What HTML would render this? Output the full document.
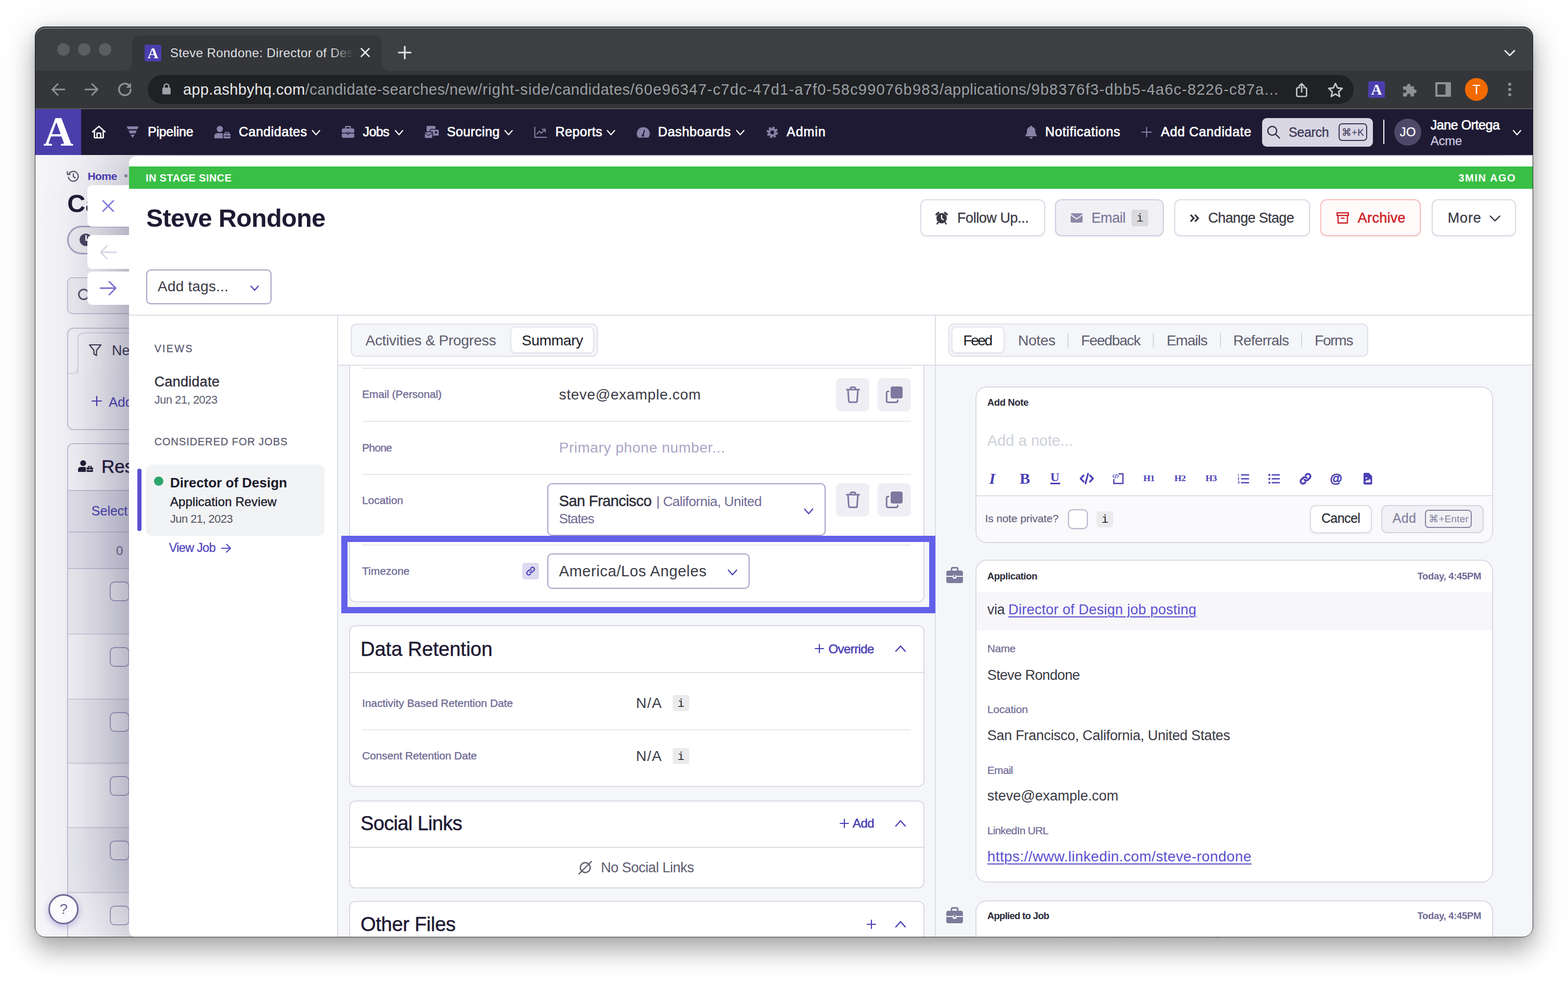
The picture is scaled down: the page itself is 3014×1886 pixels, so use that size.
<!DOCTYPE html>
<html lang="en"><head><meta charset="utf-8"><title>Steve Rondone: Director of Design</title>
<style>
html,body{margin:0;padding:0;background:#fff;}
body{width:3014px;height:1886px;position:relative;overflow:hidden;font-family:"Liberation Sans",sans-serif;}
.a{position:absolute;box-sizing:border-box;}
.t{position:absolute;white-space:nowrap;line-height:1;}
svg{position:absolute;overflow:visible;}
u{text-decoration-thickness:2px;text-underline-offset:4px;}
</style></head><body>
<div class="a" style="left:67px;top:51px;width:2880px;height:1751px;border-radius:20px;box-shadow:0 25px 46px rgba(0,0,0,.29),0 0 14px rgba(0,0,0,.09),0 6px 80px rgba(0,0,0,.10);"></div>
<div class="a" id="win" style="left:67px;top:51px;width:2880px;height:1751px;border-radius:20px;overflow:hidden;background:#f7f7fa;">
<div class="a" style="left:-67px;top:-51px;width:3014px;height:1886px;">
<div class="a" style="left:67px;top:51px;width:2880px;height:86px;background:#3c4043;"></div>
<div class="a" style="left:67px;top:136px;width:2880px;height:74px;background:#35363a;"></div>
<div class="a" style="left:67px;top:208px;width:2880px;height:2px;background:#56575b;"></div>
<div class="a" style="left:254px;top:68px;width:480px;height:70px;background:#35363a;border-radius:16px 16px 0 0;"></div>
<div class="a" style="left:238px;top:120px;width:16px;height:16px;background:radial-gradient(circle at 0 0,rgba(0,0,0,0) 15.5px,#35363a 16.5px);"></div>
<div class="a" style="left:734px;top:120px;width:16px;height:16px;background:radial-gradient(circle at 100% 0,rgba(0,0,0,0) 15.5px,#35363a 16.5px);"></div>
<div class="a" style="left:110px;top:83px;width:24px;height:24px;background:#5b5d61;border-radius:12px;"></div>
<div class="a" style="left:150px;top:83px;width:24px;height:24px;background:#5b5d61;border-radius:12px;"></div>
<div class="a" style="left:190px;top:83px;width:24px;height:24px;background:#5b5d61;border-radius:12px;"></div>
<div class="a" style="left:278px;top:86px;width:32px;height:32px;background:#4b3fae;border-radius:3px;"></div>
<span class="t" id="t1" style="top:88.3px;font-size:29px;color:#fff;font-family:'Liberation Serif',serif;font-weight:700;left:283.5px;">A</span>
<span class="t" id="t2" style="top:90.3px;font-size:24px;color:#dfe1e5;left:327px;letter-spacing:0.45px;">Steve Rondone: Director of Des</span>
<div class="a" style="left:636px;top:80px;width:46px;height:44px;background:linear-gradient(to right,rgba(53,54,58,0),#35363a 95%);"></div>
<svg style="left:692px;top:91px;" width="20" height="20" viewBox="0 0 20 20"><path d="M2.5 2.5 L17.5 17.5 M17.5 2.5 L2.5 17.5" fill="none" stroke="#e3e5e8" stroke-width="2.8" stroke-linecap="round" stroke-linejoin="round" /></svg>
<svg style="left:765px;top:88px;" width="26" height="26" viewBox="0 0 26 26"><path d="M13 1.5 V24.5 M1.5 13 H24.5" fill="none" stroke="#e3e5e8" stroke-width="3.2" stroke-linecap="round" stroke-linejoin="round" /></svg>
<svg style="left:0;top:0" width="3014" height="1886"><path d="M2893.0 97.5 L2902 106.5 L2911.0 97.5" fill="none" stroke="#e3e5e8" stroke-width="3" stroke-linecap="round" stroke-linejoin="round"/></svg>
<svg style="left:98px;top:158px;" width="28" height="28" viewBox="0 0 28 28"><path d="M26 14 H3 M13 3.5 L2.5 14 L13 24.5" fill="none" stroke="#8f9297" stroke-width="3" stroke-linecap="round" stroke-linejoin="round" /></svg>
<svg style="left:162px;top:158px;" width="28" height="28" viewBox="0 0 28 28"><path d="M2 14 H25 M15 3.5 L25.5 14 L15 24.5" fill="none" stroke="#8f9297" stroke-width="3" stroke-linecap="round" stroke-linejoin="round" /></svg>
<svg style="left:225px;top:157px;" width="30" height="30" viewBox="0 0 28 28"><path d="M24.5 14 A10.5 10.5 0 1 1 21.2 6.3" fill="none" stroke="#8f9297" stroke-width="3.1" stroke-linecap="round" stroke-linejoin="round" /><path d="M25 2 V11 H16 Z" fill="#8f9297" /></svg>
<div class="a" style="left:284px;top:144px;width:2318px;height:56px;background:#202124;border-radius:28px;"></div>
<svg style="left:311px;top:159px;" width="18" height="24" viewBox="0 0 18 24"><path d="M4.5 10 V7 A4.5 4.5 0 0 1 13.5 7 V10" fill="none" stroke="#9ea3a8" stroke-width="2.6" stroke-linecap="round" stroke-linejoin="round" /><rect x="1" y="9.5" width="16" height="13" rx="2" fill="#9ea3a8"/></svg>
<span class="t" id="t3" style="top:157.8px;font-size:29px;color:#e8eaed;left:352px;letter-spacing:0.38px;">app.ashbyhq.com</span>
<span class="t" id="t4" style="top:157.8px;font-size:29px;color:#9aa0a6;left:586.6px;letter-spacing:0.41px;">/candidate-searches/new</span>
<span class="t" id="t5" style="top:157.8px;font-size:29px;color:#9aa0a6;left:918.5px;letter-spacing:1.04px;">/right-side</span>
<span class="t" id="t6" style="top:157.8px;font-size:29px;color:#9aa0a6;left:1057.3px;letter-spacing:0.52px;">/candidates</span>
<span class="t" id="t7" style="top:157.8px;font-size:29px;color:#9aa0a6;left:1211.3px;letter-spacing:1.21px;">/60e96347-c7dc-47d1-a7f0-58c99076b983</span>
<span class="t" id="t8" style="top:157.8px;font-size:29px;color:#9aa0a6;left:1806px;letter-spacing:0.46px;">/applications</span>
<span class="t" id="t9" style="top:157.8px;font-size:29px;color:#9aa0a6;left:1973.2px;letter-spacing:1.20px;">/9b8376f3-dbb5-4a6c-8226-c87a...</span>
<svg style="left:2491.3px;top:158.6px;" width="22" height="28" viewBox="0 0 22 28"><path d="M7 9.5 H4.5 Q1.5 9.5 1.5 12.5 V23.5 Q1.5 26.5 4.5 26.5 H17.5 Q20.5 26.5 20.5 23.5 V12.5 Q20.5 9.5 17.5 9.5 H15 M11 18 V2 M6 6.8 L11 1.8 L16 6.8" fill="none" stroke="#c4c7ca" stroke-width="2.7" stroke-linecap="round" stroke-linejoin="round" /></svg>
<svg style="left:2550.5px;top:156.5px;" width="32" height="32" viewBox="0 0 32 32"><path d="M16 3.5 L19.9 12 L29 13 L22.2 19.3 L24.1 28.5 L16 23.8 L7.9 28.5 L9.8 19.3 L3 13 L12.1 12 Z" fill="none" stroke="#c4c7ca" stroke-width="2.9" stroke-linecap="round" stroke-linejoin="round" /></svg>
<div class="a" style="left:2630px;top:156px;width:32px;height:32px;background:#4b3fae;border-radius:3px;"></div>
<span class="t" id="t10" style="top:158.3px;font-size:29px;color:#fff;font-family:'Liberation Serif',serif;font-weight:700;left:2635.5px;">A</span>
<svg style="left:2695px;top:157px;" width="30" height="30" viewBox="0 0 30 30"><path d="M2 9 H9.5 V7.5 A3.5 3.5 0 1 1 16.5 7.5 V9 H23 V15 H24.5 A3.5 3.5 0 1 1 24.5 22 H23 V28.5 H16.5 V26.5 A3.5 3.5 0 1 0 9.5 26.5 V28.5 H2 V21.5 H4 A3.2 3.2 0 1 0 4 15.5 H2 Z" fill="#8e9094" /></svg>
<svg style="left:2759px;top:158px;" width="30" height="28" viewBox="0 0 30 28"><rect x="2" y="2" width="26" height="24" fill="none" stroke="#8e9094" stroke-width="4"/><rect x="19.5" y="2" width="9" height="24" fill="#8e9094"/></svg>
<div class="a" style="left:2816px;top:150px;width:44px;height:44px;background:#f06a00;border-radius:22px;"></div>
<span class="t" id="t11" style="top:159.8px;font-size:25px;color:#fff;left:2830.5px;">T</span>
<div class="a" style="left:2899px;top:159.1px;width:6px;height:6px;background:#8e9094;border-radius:3px;"></div>
<div class="a" style="left:2899px;top:169px;width:6px;height:6px;background:#8e9094;border-radius:3px;"></div>
<div class="a" style="left:2899px;top:178.9px;width:6px;height:6px;background:#8e9094;border-radius:3px;"></div>
<div class="a" style="left:67px;top:210px;width:2880px;height:88px;background:#1e1a33;"></div>
<div class="a" style="left:67px;top:210px;width:89px;height:88px;background:#4a3eab;"></div>
<span class="t" id="t12" style="top:213.2px;font-size:80px;color:#fff;font-family:'Liberation Serif',serif;font-weight:700;left:83.2px;">A</span>
<svg style="left:176px;top:241px;" width="28" height="26" viewBox="0 0 28 26"><path d="M2 12.5 L14 2 L26 12.5 M5.5 10.5 V23 Q5.5 24 6.5 24 H21.5 Q22.5 24 22.5 23 V10.5 M10.5 24 V15 H17.5 V24" fill="none" stroke="#fff" stroke-width="2.6" stroke-linecap="round" stroke-linejoin="round" /></svg>
<svg style="left:243px;top:243px;" width="24" height="22" viewBox="0 0 24 22"><path d="M0.5 0 H23.5 L21 5.5 H3 Z" fill="#8882a8" /><path d="M4.2 8 H19.8 L17.3 13.5 H6.7 Z" fill="#8882a8" /><path d="M8 16 H16 L12 22 Z" fill="#8882a8" /></svg>
<span class="t" id="t13" style="top:240.8px;font-size:25px;color:#fff;-webkit-text-stroke:0.7px #fff;left:284px;letter-spacing:-0.19px;">Pipeline</span>
<svg style="left:412px;top:242px;" width="31" height="24" viewBox="0 0 31 24"><circle cx="10.5" cy="6" r="6" fill="#8882a8"/><path d="M0 24 V20 Q0 14 6 14 H14 Q15.5 14 16 14.5 V24 Z" fill="#8882a8" /><rect x="17.5" y="15" width="13.5" height="9" rx="1.5" fill="#8882a8"/><path d="M21 15 V12.6 H27.5 V15" fill="none" stroke="#8882a8" stroke-width="1.8" stroke-linecap="round" stroke-linejoin="round" /><rect x="17.5" y="19" width="13.5" height="1.1" fill="#1e1a33"/><rect x="23" y="18.2" width="2.6" height="2.6" fill="#1e1a33"/></svg>
<span class="t" id="t14" style="top:240.8px;font-size:25px;color:#fff;-webkit-text-stroke:0.7px #fff;left:459px;letter-spacing:0.50px;">Candidates</span>
<svg style="left:0;top:0" width="3014" height="1886"><path d="M600.5 251.0 L607.5 259.0 L614.5 251.0" fill="none" stroke="#fff" stroke-width="2.2" stroke-linecap="round" stroke-linejoin="round"/></svg>
<svg style="left:657px;top:242px;" width="24" height="23" viewBox="0 0 24 23"><rect x="0" y="5" width="24" height="18" rx="3" fill="#8882a8"/><path d="M7.5 5 V2.5 Q7.5 1.2 8.8 1.2 H15.2 Q16.5 1.2 16.5 2.5 V5" fill="none" stroke="#8882a8" stroke-width="2.4" stroke-linecap="round" stroke-linejoin="round" /><rect x="0" y="13" width="24" height="1.6" fill="#1e1a33"/><rect x="9.5" y="11.5" width="5" height="5" rx="1" fill="#1e1a33"/><rect x="10.7" y="12.2" width="2.6" height="2.2" fill="#8882a8"/></svg>
<span class="t" id="t15" style="top:240.8px;font-size:25px;color:#fff;-webkit-text-stroke:0.7px #fff;left:697.5px;letter-spacing:-0.60px;">Jobs</span>
<svg style="left:0;top:0" width="3014" height="1886"><path d="M760.0 251.0 L767 259.0 L774.0 251.0" fill="none" stroke="#fff" stroke-width="2.2" stroke-linecap="round" stroke-linejoin="round"/></svg>
<svg style="left:816px;top:242px;" width="28" height="24" viewBox="0 0 28 24"><rect x="4" y="0" width="17" height="11" rx="1.5" fill="#8882a8"/><rect x="11" y="6.5" width="17" height="13" rx="1.5" fill="#8882a8" stroke="#1e1a33" stroke-width="1.5"/><rect x="20" y="10.5" width="4" height="4" fill="#1e1a33"/><rect x="0" y="11.5" width="15.5" height="12.5" rx="1.5" fill="#8882a8" stroke="#1e1a33" stroke-width="1.5"/><path d="M0.5 13.5 L7.7 18.5 L15 13.5" fill="none" stroke="#1e1a33" stroke-width="1.5" stroke-linecap="round" stroke-linejoin="round" /></svg>
<span class="t" id="t16" style="top:240.8px;font-size:25px;color:#fff;-webkit-text-stroke:0.7px #fff;left:859px;letter-spacing:0.38px;">Sourcing</span>
<svg style="left:0;top:0" width="3014" height="1886"><path d="M970.6 251.0 L977.6 259.0 L984.6 251.0" fill="none" stroke="#fff" stroke-width="2.2" stroke-linecap="round" stroke-linejoin="round"/></svg>
<svg style="left:1027px;top:244px;" width="24" height="21" viewBox="0 0 24 21"><path d="M1 0.5 V20 H23.5" fill="none" stroke="#8882a8" stroke-width="2" stroke-linecap="round" stroke-linejoin="round" /><path d="M5 13.5 L10 8.5 L13.5 12 L20.5 5 M15.5 4.5 H21 V10" fill="none" stroke="#8882a8" stroke-width="2" stroke-linecap="round" stroke-linejoin="round" /></svg>
<span class="t" id="t17" style="top:240.8px;font-size:25px;color:#fff;-webkit-text-stroke:0.7px #fff;left:1067.5px;letter-spacing:0.41px;">Reports</span>
<svg style="left:0;top:0" width="3014" height="1886"><path d="M1167.4 251.0 L1174.4 259.0 L1181.4 251.0" fill="none" stroke="#fff" stroke-width="2.2" stroke-linecap="round" stroke-linejoin="round"/></svg>
<svg style="left:1223.5px;top:244.5px;" width="25" height="19.6" viewBox="0 0 28 22"><path d="M3 22 A14 14 0 1 1 25 22 Z" fill="#8882a8" /><path d="M13 18 L16.5 6.5" fill="none" stroke="#1e1a33" stroke-width="2.4" stroke-linecap="round" stroke-linejoin="round" /><circle cx="13.2" cy="17.5" r="2.6" fill="#1e1a33"/></svg>
<span class="t" id="t18" style="top:240.8px;font-size:25px;color:#fff;-webkit-text-stroke:0.7px #fff;left:1264.8px;letter-spacing:0.55px;">Dashboards</span>
<svg style="left:0;top:0" width="3014" height="1886"><path d="M1416.0 251.0 L1423 259.0 L1430.0 251.0" fill="none" stroke="#fff" stroke-width="2.2" stroke-linecap="round" stroke-linejoin="round"/></svg>
<svg style="left:1472.5px;top:242.5px;" width="23" height="23" viewBox="-13 -13 26 26"><circle r="9.2" fill="none" stroke="#8882a8" stroke-width="6.2" stroke-dasharray="4.3 2.925"/><circle r="6.8" fill="none" stroke="#8882a8" stroke-width="5"/></svg>
<span class="t" id="t19" style="top:240.8px;font-size:25px;color:#fff;-webkit-text-stroke:0.7px #fff;left:1512px;letter-spacing:0.96px;">Admin</span>
<svg style="left:1971px;top:241px;" width="22" height="26" viewBox="0 0 22 26"><path d="M11 0.5 Q12.8 0.5 12.8 2.4 Q19 4 19 11 Q19 17 22 19.5 V21 H0 V19.5 Q3 17 3 11 Q3 4 9.2 2.4 Q9.2 0.5 11 0.5 Z" fill="#8882a8" /><path d="M8 22.5 A3 3 0 0 0 14 22.5 Z" fill="#8882a8" /></svg>
<span class="t" id="t20" style="top:240.8px;font-size:25px;color:#fff;-webkit-text-stroke:0.7px #fff;left:2009px;letter-spacing:0.65px;">Notifications</span>
<svg style="left:2194px;top:244px;" width="20" height="20" viewBox="0 0 20 20"><path d="M10 1 V19 M1 10 H19" fill="none" stroke="#8882a8" stroke-width="2" stroke-linecap="round" stroke-linejoin="round" /></svg>
<span class="t" id="t21" style="top:240.8px;font-size:25px;color:#fff;-webkit-text-stroke:0.7px #fff;left:2231.6px;letter-spacing:0.67px;">Add Candidate</span>
<div class="a" style="left:2426px;top:227px;width:213px;height:55px;background:#d9d6e3;border-radius:9px;"></div>
<svg style="left:2435px;top:241px;" width="26" height="26" viewBox="0 0 26 26"><circle cx="10.5" cy="10.5" r="8.5" fill="none" stroke="#2e2a45" stroke-width="2.4"/><path d="M17 17 L24.5 24.5" fill="none" stroke="#2e2a45" stroke-width="2.4" stroke-linecap="round" stroke-linejoin="round" /></svg>
<span class="t" id="t22" style="top:241.8px;font-size:25px;color:#3a3555;-webkit-text-stroke:0.3px #3a3555;left:2477px;letter-spacing:-0.32px;">Search</span>
<div class="a" style="left:2573px;top:237px;width:55px;height:34px;border-radius:7px;border:2px solid #3a3555;"></div>
<span class="t" id="t23" style="top:244.7px;font-size:19px;color:#3a3555;left:2579px;font-family:&quot;Liberation Sans&quot;,&quot;DejaVu Sans&quot;,sans-serif;letter-spacing:0.03px;">&#8984;+K</span>
<div class="a" style="left:2659px;top:230px;width:2px;height:47px;background:#fff;"></div>
<div class="a" style="left:2680px;top:228px;width:52px;height:52px;background:#4e4869;border-radius:26px;"></div>
<span class="t" id="t24" style="top:242.3px;font-size:24px;color:#fff;-webkit-text-stroke:0.3px #fff;left:2690.5px;letter-spacing:0.33px;">JO</span>
<span class="t" id="t25" style="top:227.8px;font-size:25px;color:#fff;-webkit-text-stroke:0.7px #fff;left:2749.7px;letter-spacing:-0.43px;">Jane Ortega</span>
<span class="t" id="t26" style="top:258.9px;font-size:24px;color:#cdc9e0;-webkit-text-stroke:0.3px #cdc9e0;left:2749.7px;letter-spacing:-0.19px;">Acme</span>
<svg style="left:0;top:0" width="3014" height="1886"><path d="M2909.0 251.0 L2916 259.0 L2923.0 251.0" fill="none" stroke="#fff" stroke-width="2.2" stroke-linecap="round" stroke-linejoin="round"/></svg>
<div class="a" style="left:67px;top:298px;width:2880px;height:1504px;overflow:hidden;"><div class="a" style="left:-67px;top:-298px;width:3014px;height:1886px;">
<div class="a" style="left:67px;top:298px;width:200px;height:1504px;background:#f7f7fa;"></div>
<svg style="left:128px;top:327px;" width="25" height="24" viewBox="0 0 25 24"><path d="M4.2 8 A9.5 9.5 0 1 1 3.5 13.5" fill="none" stroke="#55556a" stroke-width="2.2" stroke-linecap="round" stroke-linejoin="round" /><path d="M1.5 3 V8.5 H7" fill="none" stroke="#55556a" stroke-width="2.2" stroke-linecap="round" stroke-linejoin="round" /><path d="M13 7 V12.5 L16.5 15" fill="none" stroke="#55556a" stroke-width="2.2" stroke-linecap="round" stroke-linejoin="round" /></svg>
<span class="t" id="t27" style="top:327.7px;font-size:21px;color:#4a3fb5;font-weight:700;left:168.4px;letter-spacing:-0.52px;">Home</span>
<div class="a" style="left:239px;top:335px;width:6px;height:6px;background:#9a97b0;border-radius:2px;"></div>
<span class="t" id="t28" style="top:367.3px;font-size:48.5px;color:#1e1a33;font-weight:700;left:129.3px;">Candidates</span>
<div class="a" style="left:129px;top:433.5px;width:400px;height:55px;background:#f0f0f4;border-radius:28px;border:3px solid #a9a6c3;"></div>
<div class="a" style="left:152.7px;top:449.3px;width:24px;height:24px;background:#4a4662;border-radius:12px;"></div>
<div class="a" style="left:163.5px;top:452px;width:3px;height:11px;background:#f0f0f4;"></div>
<div class="a" style="left:163.5px;top:460px;width:9px;height:3px;background:#f0f0f4;"></div>
<div class="a" style="left:128.5px;top:533px;width:600px;height:71px;background:#f0f0f4;border-radius:10px;border:2px solid #c7c5d8;"></div>
<div class="a" style="left:149.8px;top:555px;width:22px;height:22px;border-radius:11px;border:3px solid #55556a;"></div>
<div class="a" style="left:128.5px;top:629.5px;width:600px;height:197px;background:#f7f7fa;border-radius:12px;border:2px solid #c7c5d8;"></div>
<div class="a" style="left:149px;top:639px;width:500px;height:80px;background:#f9f9fb;border-radius:12px 0 0 0;border-left:2px solid #dcdbe6;border-top:2px solid #dcdbe6;"></div>
<div class="a" style="left:130.5px;top:705px;width:20.5px;height:14px;border-radius:0 0 12px 0;border-right:2px solid #dcdbe6;border-bottom:2px solid #dcdbe6;"></div>
<svg style="left:170px;top:661px;" width="26" height="26" viewBox="0 0 26 26"><path d="M2 2 H24 L15.5 12.5 V22.5 L10.5 19.5 V12.5 Z" fill="none" stroke="#3a3a50" stroke-width="2.2" stroke-linecap="round" stroke-linejoin="round" /></svg>
<span class="t" id="t29" style="top:661.3px;font-size:27px;color:#3a3a50;left:215px;">New Search</span>
<svg style="left:176px;top:761px;" width="20" height="20" viewBox="0 0 20 20"><path d="M10 1 V19 M1 10 H19" fill="none" stroke="#4a3fb5" stroke-width="2.2" stroke-linecap="round" stroke-linejoin="round" /></svg>
<span class="t" id="t30" style="top:759.8px;font-size:26px;color:#4a3fb5;left:209px;">Add Filter</span>
<div class="a" style="left:128.5px;top:851.5px;width:600px;height:1000px;background:#f7f7fa;border-radius:12px;border:2px solid #c7c5d8;"></div>
<svg style="left:150px;top:884px;" width="29" height="24" viewBox="0 0 31 24"><circle cx="10.5" cy="6" r="6" fill="#1e1a33"/><path d="M0 24 V20 Q0 14 6 14 H14 Q15.5 14 16 14.5 V24 Z" fill="#1e1a33" /><rect x="17.5" y="15" width="13.5" height="9" rx="1.5" fill="#1e1a33"/><path d="M21 15 V12.6 H27.5 V15" fill="none" stroke="#1e1a33" stroke-width="1.8" stroke-linecap="round" stroke-linejoin="round" /><rect x="17.5" y="19" width="13.5" height="1.1" fill="#eeeef3"/><rect x="23" y="18.2" width="2.6" height="2.6" fill="#eeeef3"/></svg>
<span class="t" id="t31" style="top:878.9px;font-size:35px;color:#1e1a33;-webkit-text-stroke:0.5px #1e1a33;left:195px;">Results</span>
<div class="a" style="left:130.5px;top:941.5px;width:600px;height:82px;background:#e6e5ee;border-top:2px solid #c7c5d8;border-bottom:2px solid #c7c5d8;"></div>
<span class="t" id="t32" style="top:969.8px;font-size:25px;color:#4a3fb5;left:175.8px;">Select all</span>
<div class="a" style="left:130.5px;top:1023.5px;width:600px;height:69px;background:#e6e5ee;"></div>
<span class="t" id="t33" style="top:1047.4px;font-size:24.5px;color:#6f6a94;left:223px;">0</span>
<div class="a" style="left:130.5px;top:1092px;width:600px;height:2px;background:#c7c5d8;"></div>
<div class="a" style="left:130.5px;top:1094px;width:600px;height:125px;background:#efeff4;"></div>
<div class="a" style="left:211px;top:1118px;width:38px;height:38px;background:#f7f7fa;border-radius:9px;border:2px solid #a9a6c3;"></div>
<div class="a" style="left:130.5px;top:1218.4px;width:600px;height:2px;background:#d5d3e2;"></div>
<div class="a" style="left:211px;top:1244.4px;width:38px;height:38px;background:#f7f7fa;border-radius:9px;border:2px solid #a9a6c3;"></div>
<div class="a" style="left:130.5px;top:1344.5px;width:600px;height:125px;background:#efeff4;"></div>
<div class="a" style="left:130.5px;top:1342.5px;width:600px;height:2px;background:#d5d3e2;"></div>
<div class="a" style="left:211px;top:1368.5px;width:38px;height:38px;background:#f7f7fa;border-radius:9px;border:2px solid #a9a6c3;"></div>
<div class="a" style="left:130.5px;top:1465.8px;width:600px;height:2px;background:#d5d3e2;"></div>
<div class="a" style="left:211px;top:1491.8px;width:38px;height:38px;background:#f7f7fa;border-radius:9px;border:2px solid #a9a6c3;"></div>
<div class="a" style="left:130.5px;top:1592.4px;width:600px;height:125px;background:#efeff4;"></div>
<div class="a" style="left:130.5px;top:1590.4px;width:600px;height:2px;background:#d5d3e2;"></div>
<div class="a" style="left:211px;top:1616.4px;width:38px;height:38px;background:#f7f7fa;border-radius:9px;border:2px solid #a9a6c3;"></div>
<div class="a" style="left:130.5px;top:1714.5px;width:600px;height:2px;background:#d5d3e2;"></div>
<div class="a" style="left:211px;top:1740.5px;width:38px;height:38px;background:#f7f7fa;border-radius:9px;border:2px solid #a9a6c3;"></div>
<div class="a" style="left:248px;top:300px;width:2700px;height:1501.5px;background:#fff;border-radius:14px 0 0 14px;box-shadow:0 0 178px rgba(40,34,80,.58);"></div>
<div class="a" style="left:168px;top:356px;width:90px;height:80px;background:#fff;border-radius:9px 0 0 9px;"></div>
<div class="a" style="left:168px;top:452px;width:90px;height:65px;background:#fff;border-radius:9px 0 0 9px;"></div>
<div class="a" style="left:168px;top:521.5px;width:90px;height:64.5px;background:#fff;border-radius:9px 0 0 9px;"></div>
<svg style="left:197px;top:385.3px;" width="22" height="22" viewBox="0 0 22 22"><path d="M1 1 L21 21 M21 1 L1 21" fill="none" stroke="#7f77d2" stroke-width="2.6" stroke-linecap="round" stroke-linejoin="round" /></svg>
<svg style="left:192px;top:471px;" width="32" height="28" viewBox="0 0 32 28"><path d="M31 14 H2 M14 1.5 L1.5 14 L14 26.5" fill="none" stroke="#d8d5e8" stroke-width="2.8" stroke-linecap="round" stroke-linejoin="round" /></svg>
<svg style="left:192px;top:539.6px;" width="32" height="28" viewBox="0 0 32 28"><path d="M1 14 H30 M18 1.5 L30.5 14 L18 26.5" fill="none" stroke="#7a70d0" stroke-width="2.8" stroke-linecap="round" stroke-linejoin="round" /></svg>
<div class="a" style="left:93px;top:1719px;width:58px;height:58px;background:#fbfbfd;border-radius:29px;border:3px solid #6f6a94;box-shadow:0 4px 14px rgba(74,63,181,.35);"></div>
<span class="t" id="t34" style="top:1734.3px;font-size:28px;color:#6f6a94;left:114.5px;">?</span>
<div class="a" style="left:248px;top:320px;width:2700px;height:43px;background:#39bf46;"></div>
<span class="t" id="t35" style="top:331.7px;font-size:20px;color:#fff;font-weight:700;left:280px;letter-spacing:0.41px;">IN STAGE SINCE</span>
<span class="t" id="t36" style="top:331.7px;font-size:20px;color:#fff;font-weight:700;left:2803.6px;letter-spacing:1.55px;">3MIN AGO</span>
<span class="t" id="t37" style="top:394.8px;font-size:48.5px;color:#1e1a33;font-weight:700;left:281px;letter-spacing:-0.67px;">Steve Rondone</span>
<div class="a" style="left:1769px;top:382.8px;width:239.5px;height:71.6px;background:#fff;border-radius:12px;border:2px solid #dcdbe6;box-shadow:0 2px 3px rgba(30,26,60,.07);"></div>
<svg style="left:1798.4px;top:406.2px;" width="24" height="26" viewBox="0 0 24 26"><circle cx="12" cy="13.5" r="10" fill="#3a3a45"/><path d="M12 8 V14 L15.3 16.4" fill="none" stroke="#fff" stroke-width="2.2" stroke-linecap="round" stroke-linejoin="round" /><path d="M1.8 6.3 L5.8 2.8 M22.2 6.3 L18.2 2.8" fill="none" stroke="#3a3a45" stroke-width="3.6" stroke-linecap="round" stroke-linejoin="round" /><path d="M5 22 L3.6 24.3 M19 22 L20.4 24.3" fill="none" stroke="#3a3a45" stroke-width="2.8" stroke-linecap="round" stroke-linejoin="round" /></svg>
<span class="t" id="t38" style="top:406.4px;font-size:27px;color:#3a3a45;-webkit-text-stroke:0.3px #3a3a45;left:1840px;letter-spacing:-0.44px;">Follow Up...</span>
<div class="a" style="left:2027.5px;top:382.8px;width:209.5px;height:71.6px;background:#f1f1f5;border-radius:12px;border:2px solid #cfcde0;box-shadow:0 2px 3px rgba(30,26,60,.07);"></div>
<svg style="left:2058px;top:409.5px;" width="23" height="18" viewBox="0 0 23 18"><rect x="0" y="0" width="23" height="18" rx="2.5" fill="#8d89a8"/><path d="M0.5 3 L11.5 11 L22.5 3" fill="none" stroke="#f1f1f5" stroke-width="2" stroke-linecap="round" stroke-linejoin="round" /></svg>
<span class="t" id="t39" style="top:406.4px;font-size:27px;color:#7d789e;-webkit-text-stroke:0.3px #7d789e;left:2098px;letter-spacing:-0.43px;">Email</span>
<div class="a" style="left:2175.4px;top:403.3px;width:31.4px;height:31.4px;background:#dadade;border-radius:4px;"></div>
<span class="t" id="t40" style="top:409.8px;font-size:22px;color:#333;font-family:'Liberation Mono',monospace;left:2184.5px;">i</span>
<div class="a" style="left:2257px;top:382.8px;width:260.5px;height:71.6px;background:#fff;border-radius:12px;border:2px solid #dcdbe6;box-shadow:0 2px 3px rgba(30,26,60,.07);"></div>
<svg style="left:2286.5px;top:411.5px;" width="18" height="15" viewBox="0 0 18 15"><path d="M1.5 1 L7.5 7.5 L1.5 14 M10 1 L16 7.5 L10 14" fill="none" stroke="#33333f" stroke-width="3.3"/></svg>
<span class="t" id="t41" style="top:406.4px;font-size:27px;color:#3a3a45;-webkit-text-stroke:0.3px #3a3a45;left:2322.2px;letter-spacing:-0.65px;">Change Stage</span>
<div class="a" style="left:2538.4px;top:382.8px;width:193.1px;height:71.6px;background:#fffafa;border-radius:12px;border:2px solid #f9bcbd;box-shadow:0 2px 3px rgba(30,26,60,.07);"></div>
<svg style="left:2568.5px;top:408px;" width="24" height="22" viewBox="0 0 24 22"><rect x="1.2" y="1.2" width="21.6" height="5" fill="none" stroke="#d0222b" stroke-width="2.4"/><path d="M3 6.5 V20.8 H21 V6.5" fill="none" stroke="#d0222b" stroke-width="2.4" stroke-linecap="round" stroke-linejoin="round" /><path d="M9.5 11.5 H14.5" fill="none" stroke="#d0222b" stroke-width="2.4" stroke-linecap="round" stroke-linejoin="round" /></svg>
<span class="t" id="t42" style="top:406.4px;font-size:27px;color:#d0222b;-webkit-text-stroke:0.6px #d0222b;left:2609.8px;letter-spacing:0.29px;">Archive</span>
<div class="a" style="left:2751.5px;top:382.8px;width:162.0px;height:71.6px;background:#fff;border-radius:12px;border:2px solid #dcdbe6;box-shadow:0 2px 3px rgba(30,26,60,.07);"></div>
<span class="t" id="t43" style="top:406.4px;font-size:27px;color:#3a3a45;-webkit-text-stroke:0.3px #3a3a45;left:2782.7px;letter-spacing:0.89px;">More</span>
<svg style="left:0;top:0" width="3014" height="1886"><path d="M2864.7 415.5 L2873.7 424.5 L2882.7 415.5" fill="none" stroke="#2e2e3a" stroke-width="2.4" stroke-linecap="round" stroke-linejoin="round"/></svg>
<div class="a" style="left:280.5px;top:517.5px;width:241px;height:67px;background:#fff;border-radius:9px;border:2px solid #a6a1c6;"></div>
<span class="t" id="t44" style="top:537.3px;font-size:28px;color:#3a3a45;left:303px;letter-spacing:0.21px;">Add tags...</span>
<svg style="left:0;top:0" width="3014" height="1886"><path d="M482.5 550.0 L489.5 558.0 L496.5 550.0" fill="none" stroke="#4a3fb5" stroke-width="2.2" stroke-linecap="round" stroke-linejoin="round"/></svg>
<div class="a" style="left:650px;top:702px;width:1148px;height:1101px;background:#f5f6f9;"></div>
<div class="a" style="left:1799px;top:702px;width:1149px;height:1101px;background:#f5f6f9;"></div>
<div class="a" style="left:670.7px;top:660px;width:1106.3px;height:498px;background:#fff;border-radius:12px;border:2px solid #dad9e6;"></div>
<div class="a" style="left:696px;top:707px;width:1055px;height:2px;background:#e8e8ef;"></div>
<span class="t" id="t45" style="top:747.3px;font-size:21px;color:#6f6a94;-webkit-text-stroke:0.35px #6f6a94;left:696px;letter-spacing:-0.15px;">Email (Personal)</span>
<span class="t" id="t46" style="top:744.5px;font-size:28px;color:#3a3a45;left:1074.5px;letter-spacing:0.65px;">steve@example.com</span>
<div class="a" style="left:1607px;top:726.7px;width:64px;height:64px;background:#efeef4;border-radius:9px;"></div>
<svg style="left:1625.5px;top:742.7px;" width="27" height="32" viewBox="0 0 27 32"><path d="M1.5 6 H25.5 M9 5.5 V3.5 Q9 1.5 11 1.5 H16 Q18 1.5 18 3.5 V5.5" fill="none" stroke="#7d789e" stroke-width="3" stroke-linecap="round" stroke-linejoin="round" /><path d="M4 6.5 L5.5 28 Q5.7 30.3 8 30.3 H19 Q21.3 30.3 21.5 28 L23 6.5" fill="none" stroke="#7d789e" stroke-width="3" stroke-linecap="round" stroke-linejoin="round" /></svg>
<div class="a" style="left:1687px;top:726.7px;width:64px;height:64px;background:#efeef4;border-radius:9px;"></div>
<svg style="left:1703px;top:742.7px;" width="32" height="32" viewBox="0 0 32 32"><rect x="9" y="0" width="23" height="23" rx="4" fill="#7d789e"/><path d="M5 9.5 H4 Q1.2 9.5 1.2 12.3 V27.5 Q1.2 30.5 4 30.5 H19.5 Q22.5 30.5 22.5 27.5 V26.5" fill="none" stroke="#7d789e" stroke-width="3" stroke-linecap="round" stroke-linejoin="round" /></svg>
<div class="a" style="left:696px;top:808.5px;width:1055px;height:2px;background:#e8e8ef;"></div>
<span class="t" id="t47" style="top:849.5px;font-size:21px;color:#6f6a94;-webkit-text-stroke:0.35px #6f6a94;left:696px;letter-spacing:-0.73px;">Phone</span>
<span class="t" id="t48" style="top:847.3px;font-size:28px;color:#aaa6c6;left:1074.5px;letter-spacing:0.56px;">Primary phone number...</span>
<div class="a" style="left:696px;top:910.7px;width:1055px;height:2px;background:#e8e8ef;"></div>
<span class="t" id="t49" style="top:951.3px;font-size:21px;color:#6f6a94;-webkit-text-stroke:0.35px #6f6a94;left:696px;letter-spacing:-0.06px;">Location</span>
<div class="a" style="left:1052px;top:928.5px;width:534.5px;height:101px;background:#fff;border-radius:9px;border:2px solid #a6a1c6;"></div>
<span class="t" id="t50" style="top:949.2px;font-size:29px;color:#2e2e3a;-webkit-text-stroke:0.5px #2e2e3a;left:1074.5px;letter-spacing:-0.59px;">San Francisco</span>
<span class="t" id="t51" style="top:951.3px;font-size:26px;color:#6f6a94;left:1261.5px;letter-spacing:-0.55px;">| California, United</span>
<span class="t" id="t52" style="top:984.3px;font-size:26px;color:#6f6a94;left:1074.5px;letter-spacing:-1.10px;">States</span>
<svg style="left:0;top:0" width="3014" height="1886"><path d="M1546.4 978.5 L1554.4 987.5 L1562.4 978.5" fill="none" stroke="#4a3fb5" stroke-width="2.2" stroke-linecap="round" stroke-linejoin="round"/></svg>
<div class="a" style="left:1607px;top:928.5px;width:64px;height:64px;background:#efeef4;border-radius:9px;"></div>
<svg style="left:1625.5px;top:944.5px;" width="27" height="32" viewBox="0 0 27 32"><path d="M1.5 6 H25.5 M9 5.5 V3.5 Q9 1.5 11 1.5 H16 Q18 1.5 18 3.5 V5.5" fill="none" stroke="#7d789e" stroke-width="3" stroke-linecap="round" stroke-linejoin="round" /><path d="M4 6.5 L5.5 28 Q5.7 30.3 8 30.3 H19 Q21.3 30.3 21.5 28 L23 6.5" fill="none" stroke="#7d789e" stroke-width="3" stroke-linecap="round" stroke-linejoin="round" /></svg>
<div class="a" style="left:1687px;top:928.5px;width:64px;height:64px;background:#efeef4;border-radius:9px;"></div>
<svg style="left:1703px;top:944.5px;" width="32" height="32" viewBox="0 0 32 32"><rect x="9" y="0" width="23" height="23" rx="4" fill="#7d789e"/><path d="M5 9.5 H4 Q1.2 9.5 1.2 12.3 V27.5 Q1.2 30.5 4 30.5 H19.5 Q22.5 30.5 22.5 27.5 V26.5" fill="none" stroke="#7d789e" stroke-width="3" stroke-linecap="round" stroke-linejoin="round" /></svg>
<div class="a" style="left:696px;top:1046.6px;width:1055px;height:2px;background:#e8e8ef;"></div>
<span class="t" id="t53" style="top:1086.5px;font-size:21px;color:#6f6a94;-webkit-text-stroke:0.35px #6f6a94;left:696px;letter-spacing:-0.02px;">Timezone</span>
<div class="a" style="left:1004px;top:1082px;width:31.8px;height:32.2px;background:#dcd9f0;border-radius:5px;"></div>
<svg style="left:1010.8px;top:1088.7px;" width="18" height="18" viewBox="0 0 18 18"><path d="M7.5 10.5 A3.6 3.6 0 0 0 12.6 10.5 L15.3 7.8 A3.6 3.6 0 0 0 10.2 2.7 L9.3 3.6 M10.5 7.5 A3.6 3.6 0 0 0 5.4 7.5 L2.7 10.2 A3.6 3.6 0 0 0 7.8 15.3 L8.7 14.4" fill="none" stroke="#4a3fb5" stroke-width="2.3" stroke-linecap="round" stroke-linejoin="round" /></svg>
<div class="a" style="left:1052px;top:1064.2px;width:388.5px;height:67.4px;background:#fff;border-radius:9px;border:2px solid #a6a1c6;"></div>
<span class="t" id="t54" style="top:1084.3px;font-size:29px;color:#3a3a45;left:1074.5px;letter-spacing:0.61px;">America/Los Angeles</span>
<svg style="left:0;top:0" width="3014" height="1886"><path d="M1400.0 1096.0 L1408 1105.0 L1416.0 1096.0" fill="none" stroke="#4a3fb5" stroke-width="2.2" stroke-linecap="round" stroke-linejoin="round"/></svg>
<div class="a" style="left:670.7px;top:1202.2px;width:1106.3px;height:310.8px;background:#fff;border-radius:12px;border:2px solid #dad9e6;"></div>
<div class="a" style="left:672.7px;top:1291.5px;width:1102.3px;height:2px;background:#dedee8;"></div>
<span class="t" id="t55" style="top:1229.0px;font-size:38px;color:#1e1a33;-webkit-text-stroke:0.5px #1e1a33;left:693px;letter-spacing:0.01px;">Data Retention</span>
<svg style="left:1566px;top:1238px;" width="18" height="18" viewBox="0 0 18 18"><path d="M9 1 V17 M1 9 H17" fill="none" stroke="#4a3fb5" stroke-width="2.2" stroke-linecap="round" stroke-linejoin="round" /></svg>
<span class="t" id="t56" style="top:1235.7px;font-size:24px;color:#4a3fb5;-webkit-text-stroke:0.6px #4a3fb5;left:1592.5px;letter-spacing:-0.58px;">Override</span>
<svg style="left:0;top:0" width="3014" height="1886"><path d="M1722.0 1252.0 L1731 1242.0 L1740.0 1252.0" fill="none" stroke="#4a3fb5" stroke-width="2.4" stroke-linecap="round" stroke-linejoin="round"/></svg>
<span class="t" id="t57" style="top:1340.5px;font-size:21px;color:#6f6a94;-webkit-text-stroke:0.35px #6f6a94;left:696px;letter-spacing:-0.10px;">Inactivity Based Retention Date</span>
<span class="t" id="t58" style="top:1338.0px;font-size:28px;color:#3a3a45;left:1222.6px;letter-spacing:1.26px;">N/A</span>
<div class="a" style="left:1293px;top:1336px;width:31.8px;height:31.4px;background:#ebebed;border-radius:5px;"></div>
<span class="t" id="t59" style="top:1342.7px;font-size:22px;color:#222;font-family:'Liberation Mono',monospace;left:1302.3px;">i</span>
<div class="a" style="left:696px;top:1401.7px;width:1055px;height:2px;background:#e8e8ef;"></div>
<span class="t" id="t60" style="top:1442.3px;font-size:21px;color:#6f6a94;-webkit-text-stroke:0.35px #6f6a94;left:696px;letter-spacing:-0.16px;">Consent Retention Date</span>
<span class="t" id="t61" style="top:1440.1px;font-size:28px;color:#3a3a45;left:1222.6px;letter-spacing:1.26px;">N/A</span>
<div class="a" style="left:1293px;top:1438px;width:31.8px;height:31.4px;background:#ebebed;border-radius:5px;"></div>
<span class="t" id="t62" style="top:1444.7px;font-size:22px;color:#222;font-family:'Liberation Mono',monospace;left:1302.3px;">i</span>
<div class="a" style="left:670.7px;top:1538.6px;width:1106.3px;height:169.4px;background:#fff;border-radius:12px;border:2px solid #dad9e6;"></div>
<div class="a" style="left:672.7px;top:1627.8px;width:1102.3px;height:2px;background:#dedee8;"></div>
<span class="t" id="t63" style="top:1564.4px;font-size:38px;color:#1e1a33;-webkit-text-stroke:0.5px #1e1a33;left:693px;letter-spacing:-0.64px;">Social Links</span>
<svg style="left:1614px;top:1574px;" width="18" height="18" viewBox="0 0 18 18"><path d="M9 1 V17 M1 9 H17" fill="none" stroke="#4a3fb5" stroke-width="2.2" stroke-linecap="round" stroke-linejoin="round" /></svg>
<span class="t" id="t64" style="top:1571.3px;font-size:24px;color:#4a3fb5;-webkit-text-stroke:0.6px #4a3fb5;left:1639px;letter-spacing:-0.55px;">Add</span>
<svg style="left:0;top:0" width="3014" height="1886"><path d="M1722.0 1588.0 L1731 1578.0 L1740.0 1588.0" fill="none" stroke="#4a3fb5" stroke-width="2.4" stroke-linecap="round" stroke-linejoin="round"/></svg>
<svg style="left:1111px;top:1654px;" width="28" height="28" viewBox="0 0 28 28"><circle cx="14" cy="14" r="9.5" fill="none" stroke="#5c5c6e" stroke-width="2.4"/><path d="M2 26 L26 2" fill="none" stroke="#5c5c6e" stroke-width="2.4" stroke-linecap="round" stroke-linejoin="round" /></svg>
<span class="t" id="t65" style="top:1654.5px;font-size:27px;color:#5c5c6e;left:1155px;letter-spacing:-0.49px;">No Social Links</span>
<div class="a" style="left:670.7px;top:1732.2px;width:1106.3px;height:200px;background:#fff;border-radius:12px;border:2px solid #dad9e6;"></div>
<span class="t" id="t66" style="top:1758.4px;font-size:38px;color:#1e1a33;-webkit-text-stroke:0.5px #1e1a33;left:693px;letter-spacing:-0.28px;">Other Files</span>
<svg style="left:1666px;top:1768px;" width="18" height="18" viewBox="0 0 18 18"><path d="M9 1 V17 M1 9 H17" fill="none" stroke="#4a3fb5" stroke-width="2.2" stroke-linecap="round" stroke-linejoin="round" /></svg>
<svg style="left:0;top:0" width="3014" height="1886"><path d="M1722.0 1782.0 L1731 1772.0 L1740.0 1782.0" fill="none" stroke="#4a3fb5" stroke-width="2.4" stroke-linecap="round" stroke-linejoin="round"/></svg>
<div class="a" style="left:1875px;top:742.5px;width:994.5px;height:301.5px;background:#fff;border-radius:22px;border:2px solid #dad9e6;"></div>
<div class="a" style="left:1877px;top:952px;width:990.5px;height:90px;background:#fafafc;border-radius:0 0 20px 20px;border-top:2px solid #dedee8;"></div>
<span class="t" id="t67" style="top:765.3px;font-size:18.5px;color:#2a2a3a;font-weight:700;left:1897.8px;letter-spacing:-0.40px;">Add Note</span>
<span class="t" id="t68" style="top:832.8px;font-size:29px;color:#cdd1da;left:1897.8px;letter-spacing:0.01px;">Add a note...</span>
<span class="t" id="t69" style="top:904.8px;font-size:30px;color:#4a3fb5;font-family:'Liberation Serif',serif;font-weight:700;left:1901.6px;font-style:italic;">I</span>
<span class="t" id="t70" style="top:904.8px;font-size:30px;color:#4a3fb5;font-family:'Liberation Serif',serif;font-weight:700;left:1960px;">B</span>
<span class="t" id="t71" style="top:905.3px;font-size:24px;color:#4a3fb5;font-family:'Liberation Serif',serif;font-weight:700;left:2019px;">U</span>
<div class="a" style="left:2019.4px;top:928.2px;width:18.6px;height:2.6px;background:#4a3fb5;"></div>
<svg style="left:2075px;top:909px;" width="28" height="22" viewBox="0 0 28 22"><path d="M8 5 L2 11 L8 17 M20 5 L26 11 L20 17 M16.5 1.5 L11.5 20.5" fill="none" stroke="#4a3fb5" stroke-width="3.2" stroke-linecap="round" stroke-linejoin="round" /></svg>
<svg style="left:2138px;top:909px;" width="22" height="22" viewBox="0 0 22 22"><path d="M13 2 H20.5 V20.5 H3 V13" fill="none" stroke="#4a3fb5" stroke-width="2.4" stroke-linecap="round" stroke-linejoin="round" /><path d="M3.5 4 L1 6.5 L3.5 9 M9.5 4 L12 6.5 L9.5 9 M7.7 2.5 L5.5 10.5" fill="none" stroke="#4a3fb5" stroke-width="1.4" stroke-linecap="round" stroke-linejoin="round" /></svg>
<span class="t" id="t72" style="top:911.3px;font-size:17.5px;color:#4a3fb5;font-family:'Liberation Serif',serif;font-weight:700;left:2197.8px;letter-spacing:-0.38px;">H1</span>
<span class="t" id="t73" style="top:911.3px;font-size:17.5px;color:#4a3fb5;font-family:'Liberation Serif',serif;font-weight:700;left:2257.5px;letter-spacing:-0.38px;">H2</span>
<span class="t" id="t74" style="top:911.3px;font-size:17.5px;color:#4a3fb5;font-family:'Liberation Serif',serif;font-weight:700;left:2317.2000000000003px;letter-spacing:-0.38px;">H3</span>
<svg style="left:2378.5px;top:910.5px;" width="22" height="19" viewBox="0 0 22 19"><path d="M7.5 2 H21 M7.5 9.5 H21 M7.5 17 H21" fill="none" stroke="#4a3fb5" stroke-width="2.6" stroke-linecap="round" stroke-linejoin="round" /><path d="M1.5 0.5 V4.5 M0.8 7.5 H2.6 L0.8 11 H2.8 M0.8 14 H2.6 V18.5 H0.8 M1.5 16.2 H2.6" fill="none" stroke="#4a3fb5" stroke-width="1.1" stroke-linecap="round" stroke-linejoin="round" /></svg>
<svg style="left:2438px;top:910.5px;" width="22" height="19" viewBox="0 0 22 19"><path d="M7.5 2 H21 M7.5 9.5 H21 M7.5 17 H21" fill="none" stroke="#4a3fb5" stroke-width="2.6" stroke-linecap="round" stroke-linejoin="round" /><circle cx="2" cy="2" r="2" fill="#4a3fb5"/><circle cx="2" cy="9.5" r="2" fill="#4a3fb5"/><circle cx="2" cy="17" r="2" fill="#4a3fb5"/></svg>
<svg style="left:2498px;top:909px;" width="23" height="23" viewBox="0 0 18 18"><path d="M7.5 10.5 A3.6 3.6 0 0 0 12.6 10.5 L15.3 7.8 A3.6 3.6 0 0 0 10.2 2.7 L9.3 3.6 M10.5 7.5 A3.6 3.6 0 0 0 5.4 7.5 L2.7 10.2 A3.6 3.6 0 0 0 7.8 15.3 L8.7 14.4" fill="none" stroke="#4a3fb5" stroke-width="2.9" stroke-linecap="round" stroke-linejoin="round" /></svg>
<span class="t" id="t75" style="top:907.8px;font-size:24px;color:#4a3fb5;font-weight:700;-webkit-text-stroke:0.8px #4a3fb5;left:2556.5px;">@</span>
<svg style="left:2620.6px;top:908.7px;" width="16.5" height="22.6" viewBox="0 0 16.5 22.6"><path d="M0 2 Q0 0 2 0 H10 L16.5 6.5 V20.6 Q16.5 22.6 14.5 22.6 H2 Q0 22.6 0 20.6 Z" fill="#4a3fb5" /><path d="M3 17.5 L6.5 13.5 L8.5 15.5 L11.5 11.5 L13.5 14 V18.5 H3 Z" fill="#fff" /><circle cx="5.5" cy="10" r="1.6" fill="#fff"/></svg>
<span class="t" id="t76" style="top:985.7px;font-size:21px;color:#66637f;-webkit-text-stroke:0.2px #66637f;left:1893.6px;letter-spacing:-0.15px;">Is note private?</span>
<div class="a" style="left:2052.6px;top:978.7px;width:38.8px;height:38.8px;background:#fff;border-radius:9px;border:2px solid #bab7d0;box-shadow:0 1px 3px rgba(30,26,60,.12);"></div>
<div class="a" style="left:2108px;top:982.6px;width:31.8px;height:31px;background:#ebebed;border-radius:5px;"></div>
<span class="t" id="t77" style="top:989.2px;font-size:22px;color:#222;font-family:'Liberation Mono',monospace;left:2117.3px;">i</span>
<div class="a" style="left:2518px;top:970.7px;width:119.4px;height:54.2px;background:#fff;border-radius:11px;border:2px solid #dcdbe6;box-shadow:0 2px 3px rgba(30,26,60,.07);"></div>
<span class="t" id="t78" style="top:984.3px;font-size:25px;color:#2e2e3a;-webkit-text-stroke:0.3px #2e2e3a;left:2539.9px;letter-spacing:-0.57px;">Cancel</span>
<div class="a" style="left:2654.5px;top:970.7px;width:197px;height:54.2px;background:#f1f1f5;border-radius:11px;border:2px solid #d5d3e3;"></div>
<span class="t" id="t79" style="top:984.3px;font-size:25px;color:#8582a0;-webkit-text-stroke:0.3px #8582a0;left:2676.8px;letter-spacing:0.36px;">Add</span>
<div class="a" style="left:2739.3px;top:980.4px;width:90.2px;height:34.6px;border-radius:7px;border:2px solid #8582a0;"></div>
<span class="t" id="t80" style="top:988.2px;font-size:19px;color:#8582a0;left:2746.3px;font-family:&quot;Liberation Sans&quot;,&quot;DejaVu Sans&quot;,sans-serif;letter-spacing:0.16px;">&#8984;+Enter</span>
<svg style="left:1819px;top:1090px;" width="32" height="31" viewBox="0 0 32 31"><rect x="0" y="7" width="32" height="24" rx="4" fill="#7d7a9c"/><path d="M10 7 V4 Q10 1.6 12.4 1.6 H19.6 Q22 1.6 22 4 V7" fill="none" stroke="#7d7a9c" stroke-width="3" stroke-linecap="round" stroke-linejoin="round" /><rect x="0" y="17" width="32" height="2" fill="#f5f6f9"/><rect x="12.5" y="15.5" width="7" height="7" rx="1.5" fill="#f5f6f9"/><rect x="14.3" y="16" width="3.4" height="3.2" fill="#7d7a9c"/></svg>
<svg style="left:1819px;top:1744px;" width="32" height="31" viewBox="0 0 32 31"><rect x="0" y="7" width="32" height="24" rx="4" fill="#7d7a9c"/><path d="M10 7 V4 Q10 1.6 12.4 1.6 H19.6 Q22 1.6 22 4 V7" fill="none" stroke="#7d7a9c" stroke-width="3" stroke-linecap="round" stroke-linejoin="round" /><rect x="0" y="17" width="32" height="2" fill="#f5f6f9"/><rect x="12.5" y="15.5" width="7" height="7" rx="1.5" fill="#f5f6f9"/><rect x="14.3" y="16" width="3.4" height="3.2" fill="#7d7a9c"/></svg>
<div class="a" style="left:1875px;top:1075.8px;width:994.5px;height:621.2px;background:#fff;border-radius:22px;border:2px solid #dad9e6;"></div>
<div class="a" style="left:1877px;top:1139px;width:990.5px;height:73px;background:#f7f7fa;"></div>
<span class="t" id="t81" style="top:1098.6px;font-size:18.5px;color:#2a2a3a;font-weight:700;left:1897.8px;letter-spacing:-0.43px;">Application</span>
<span class="t" id="t82" style="top:1098.6px;font-size:18.5px;color:#6f6a94;font-weight:700;left:2724.4px;letter-spacing:-0.32px;">Today, 4:45PM</span>
<span class="t" id="t83" style="top:1159.1px;font-size:27px;color:#3a3a45;left:1897.8px;letter-spacing:-0.36px;">via</span>
<span class="t" id="t84" style="top:1159.1px;font-size:27px;color:#5a4fcf;left:1938.3px;letter-spacing:0.24px;"><u>Director of Design job posting</u></span>
<span class="t" id="t85" style="top:1236.4px;font-size:21px;color:#6f6a94;-webkit-text-stroke:0.2px #6f6a94;left:1897.8px;letter-spacing:-0.48px;">Name</span>
<span class="t" id="t86" style="top:1284.8px;font-size:27px;color:#3a3a45;left:1897.8px;letter-spacing:-0.66px;">Steve Rondone</span>
<span class="t" id="t87" style="top:1353.0px;font-size:21px;color:#6f6a94;-webkit-text-stroke:0.2px #6f6a94;left:1897.8px;letter-spacing:-0.17px;">Location</span>
<span class="t" id="t88" style="top:1400.5px;font-size:27px;color:#3a3a45;left:1897.8px;letter-spacing:-0.30px;">San Francisco, California, United States</span>
<span class="t" id="t89" style="top:1469.7px;font-size:21px;color:#6f6a94;-webkit-text-stroke:0.2px #6f6a94;left:1897.8px;letter-spacing:-0.70px;">Email</span>
<span class="t" id="t90" style="top:1517.1px;font-size:27px;color:#3a3a45;left:1897.8px;letter-spacing:-0.03px;">steve@example.com</span>
<span class="t" id="t91" style="top:1585.5px;font-size:21px;color:#6f6a94;-webkit-text-stroke:0.2px #6f6a94;left:1897.8px;letter-spacing:-0.84px;">LinkedIn URL</span>
<span class="t" id="t92" style="top:1633.3px;font-size:28px;color:#5a4fcf;left:1897.8px;letter-spacing:0.38px;"><u>https://www.linkedin.com/steve-rondone</u></span>
<div class="a" style="left:1875px;top:1730.5px;width:994.5px;height:200px;background:#fff;border-radius:22px;border:2px solid #dad9e6;"></div>
<span class="t" id="t93" style="top:1752.0px;font-size:18.5px;color:#2a2a3a;font-weight:700;left:1897.8px;letter-spacing:-0.71px;">Applied to Job</span>
<span class="t" id="t94" style="top:1752.0px;font-size:18.5px;color:#6f6a94;font-weight:700;left:2724.4px;letter-spacing:-0.32px;">Today, 4:45PM</span>
<span class="t" id="t95" style="top:1798.6px;font-size:27px;color:#3a3a45;left:1897.8px;"><span style="color:#5a4fcf">Steve Rondone</span> applied to Director of Design</span>
<div class="a" style="left:650px;top:607px;width:2298px;height:95px;background:#fff;"></div>
<div class="a" style="left:248px;top:605px;width:2700px;height:2px;background:#dedee8;"></div>
<div class="a" style="left:650px;top:701px;width:2298px;height:2px;background:#dedee8;"></div>
<div class="a" style="left:648px;top:606px;width:2px;height:1197px;background:#dedee8;"></div>
<div class="a" style="left:1797px;top:606px;width:2px;height:1197px;background:#dedee8;"></div>
<div class="a" style="left:674px;top:622.3px;width:475px;height:63.3px;background:#f5f6f9;border-radius:11px;border:2px solid #e0e0ea;"></div>
<span class="t" id="t96" style="top:641.3px;font-size:28px;color:#5c5c6e;left:702.5px;letter-spacing:-0.28px;">Activities &amp; Progress</span>
<div class="a" style="left:980.8px;top:628.4px;width:161.5px;height:50.6px;background:#fff;border-radius:9px;border:2px solid #e6e6ee;box-shadow:0 1px 3px rgba(30,26,60,.10);"></div>
<span class="t" id="t97" style="top:641.3px;font-size:28px;color:#1a1a24;left:1003px;letter-spacing:-0.30px;">Summary</span>
<div class="a" style="left:1823px;top:622.3px;width:807px;height:63.3px;background:#f5f6f9;border-radius:11px;border:2px solid #e0e0ea;"></div>
<div class="a" style="left:1829.4px;top:628.4px;width:101.3px;height:50.6px;background:#fff;border-radius:9px;border:2px solid #e6e6ee;box-shadow:0 1px 3px rgba(30,26,60,.10);"></div>
<span class="t" id="t98" style="top:641.3px;font-size:28px;color:#1a1a24;left:1851.5px;letter-spacing:-2.44px;">Feed</span>
<span class="t" id="t99" style="top:641.3px;font-size:28px;color:#5c5c6e;left:1957px;letter-spacing:-0.29px;">Notes</span>
<span class="t" id="t100" style="top:641.3px;font-size:28px;color:#5c5c6e;left:2078px;letter-spacing:-1.14px;">Feedback</span>
<span class="t" id="t101" style="top:641.3px;font-size:28px;color:#5c5c6e;left:2242.4px;letter-spacing:-1.00px;">Emails</span>
<span class="t" id="t102" style="top:641.3px;font-size:28px;color:#5c5c6e;left:2370.6px;letter-spacing:-0.77px;">Referrals</span>
<span class="t" id="t103" style="top:641.3px;font-size:28px;color:#5c5c6e;left:2527px;letter-spacing:-1.21px;">Forms</span>
<div class="a" style="left:2052px;top:640px;width:2px;height:28px;background:#d5d5e0;"></div>
<div class="a" style="left:2215.7px;top:640px;width:2px;height:28px;background:#d5d5e0;"></div>
<div class="a" style="left:2344.8px;top:640px;width:2px;height:28px;background:#d5d5e0;"></div>
<div class="a" style="left:2501px;top:640px;width:2px;height:28px;background:#d5d5e0;"></div>
<span class="t" id="t104" style="top:659.9px;font-size:20px;color:#5c5c70;-webkit-text-stroke:0.3px #5c5c70;left:296.7px;letter-spacing:2.09px;">VIEWS</span>
<span class="t" id="t105" style="top:720.6px;font-size:27px;color:#2e2e3a;-webkit-text-stroke:0.4px #2e2e3a;left:296.7px;letter-spacing:0.27px;">Candidate</span>
<span class="t" id="t106" style="top:758.3px;font-size:22px;color:#5c5c6e;left:296.7px;letter-spacing:-0.51px;">Jun 21, 2023</span>
<span class="t" id="t107" style="top:839.0px;font-size:20px;color:#5c5c70;-webkit-text-stroke:0.3px #5c5c70;left:296.7px;letter-spacing:0.93px;">CONSIDERED FOR JOBS</span>
<div class="a" style="left:280px;top:893px;width:343.5px;height:137px;background:#f2f3f5;border-radius:12px;"></div>
<div class="a" style="left:264.4px;top:901px;width:7.4px;height:120px;background:#5a4fcf;border-radius:4px;"></div>
<div class="a" style="left:296px;top:916px;width:18px;height:18px;background:#2ea56a;border-radius:9px;"></div>
<span class="t" id="t108" style="top:915.3px;font-size:26px;color:#1a1a2a;font-weight:700;left:326.9px;letter-spacing:-0.02px;">Director of Design</span>
<span class="t" id="t109" style="top:952.9px;font-size:24px;color:#1a1a2a;-webkit-text-stroke:0.4px #1a1a2a;left:326.9px;letter-spacing:0.12px;">Application Review</span>
<span class="t" id="t110" style="top:987.0px;font-size:22px;color:#55555f;left:326.9px;letter-spacing:-0.57px;">Jun 21, 2023</span>
<span class="t" id="t111" style="top:1042.1px;font-size:23.5px;color:#4f44c0;-webkit-text-stroke:0.3px #4f44c0;left:324.8px;letter-spacing:-0.71px;">View Job</span>
<svg style="left:425px;top:1044.5px;" width="19" height="18" viewBox="0 0 19 18"><path d="M1 9 H17.5 M10.5 1.5 L18 9 L10.5 16.5" fill="none" stroke="#4f44c0" stroke-width="2.2" stroke-linecap="round" stroke-linejoin="round" /></svg>
<div class="a" style="left:656px;top:1030px;width:1142px;height:149px;border:12px solid #6360ea;"></div>
</div></div>
</div></div>
<div class="a" style="left:67px;top:51px;width:2880px;height:1751px;border-radius:20px;border:1.5px solid rgba(20,20,22,.85);pointer-events:none;"></div>
<div class="a" style="left:69px;top:52.5px;width:2876px;height:40px;border-radius:19px 19px 0 0;border-top:2px solid rgba(255,255,255,.30);pointer-events:none;"></div>
</body></html>
